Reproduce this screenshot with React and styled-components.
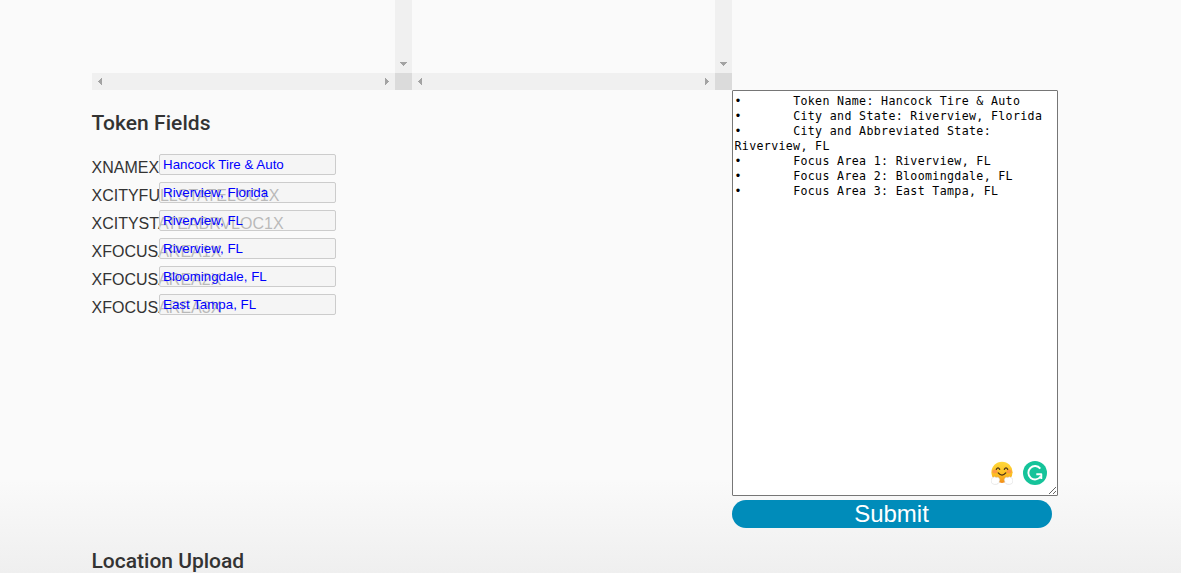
import React from "react";
import styled, { createGlobalStyle } from "styled-components";

const GlobalStyle = createGlobalStyle`
  * { box-sizing: border-box; }
  body { margin: 0; background: #fafafa; overflow: hidden; }
`;

const Page = styled.div`
  height: 573px;
  overflow: hidden;
  padding-left: 92px;
  color: #333;
  font: 16px/20px "Liberation Sans", Arial, sans-serif;
  background: linear-gradient(#fafafa 0, #fafafa 480px, #efefef 573px);
`;

const Panels = styled.div`
  display: flex;
  height: 90px;
`;

const Panel = styled.div`
  display: grid;
  grid-template-columns: 303px 17px;
  grid-template-rows: 73px 17px;
`;

const VerticalBar = styled.div`
  display: flex;
  align-items: flex-end;
  justify-content: center;
  padding-bottom: 7px;
  background: #f0f0f0;
`;

const HorizontalBar = styled.div`
  display: flex;
  align-items: center;
  justify-content: space-between;
  padding: 0 6px;
  background: #f0f0f0;
`;

const Corner = styled.div`
  background: #dbdbdb;
`;

const Arrow = styled.svg`
  display: block;
  fill: #a3a3a3;
`;

const Columns = styled.div`
  display: flex;
  height: 438px;
`;

const Fields = styled.section`
  width: 640px;
`;

const Heading = styled.h2`
  margin: 0 0 0 -0.5px;
  padding-top: 20px;
  color: #333;
  font: 500 21px/26px Roboto, sans-serif;
  letter-spacing: ${(p) => p.$spacing}px;
  white-space: nowrap;
`;

const FieldList = styled.div`
  display: flex;
  flex-direction: column;
  gap: 7px;
  padding-top: 18px;
`;

const Field = styled.label`
  display: flex;
  height: 21px;
`;

const FieldName = styled.span`
  width: 67px;
  padding-top: 4px;
  text-indent: -0.5px;
  white-space: nowrap;
`;

const FieldInput = styled.input`
  position: relative;
  width: 177px;
  height: 21px;
  padding: 1px 3px;
  border: 1px solid #ccc;
  border-radius: 2px;
  outline: 0;
  color: #00f;
  background: rgba(242, 242, 242, 0.7);
  font: 13.333px "Liberation Sans", Arial, sans-serif;
`;

const Entry = styled.section`
  width: 326px;
`;

const EditorWrap = styled.div`
  position: relative;
  height: 406px;
`;

const Editor = styled.textarea`
  display: block;
  width: 326px;
  height: 406px;
  margin: 0;
  padding: 3px 2px 2px 1.5px;
  border: 1px solid #767676;
  border-radius: 1px;
  outline: 0;
  color: #000;
  background: #fff;
  font: 11.6px/15px "DejaVu Sans Mono", monospace;
  letter-spacing: 0.347px;
  tab-size: 8;
  resize: both;
  overflow: hidden;
`;

const Badges = styled.div`
  position: absolute;
  right: 11px;
  bottom: 11px;
  display: flex;
  gap: 10px;
`;

const Submit = styled.button`
  display: block;
  width: 320px;
  height: 28px;
  margin-top: 4px;
  padding: 0 1px 0 0;
  border: 0;
  border-radius: 14px;
  color: #fff;
  background: #008cba;
  font: 24px/28px "Liberation Sans", Arial, sans-serif;
`;

const fields = [
  ["XNAMEX", "Hancock Tire & Auto"],
  ["XCITYFULLSTATELOC1X", "Riverview, Florida"],
  ["XCITYSTATEABRVLOC1X", "Riverview, FL"],
  ["XFOCUSAREA1X", "Riverview, FL"],
  ["XFOCUSAREA2X", "Bloomingdale, FL"],
  ["XFOCUSAREA3X", "East Tampa, FL"],
];

const notes = [
  "Token Name: Hancock Tire & Auto",
  "City and State: Riverview, Florida",
  "City and Abbreviated State: Riverview, FL",
  "Focus Area 1: Riverview, FL",
  "Focus Area 2: Bloomingdale, FL",
  "Focus Area 3: East Tampa, FL",
]
  .map((line) => "•\t" + line)
  .join("\n");

function ScrollPanel() {
  return (
    <Panel>
      <div />
      <VerticalBar>
        <Arrow width="7" height="4" shapeRendering="crispEdges">
          <path d="M0 0h7v1H6v1H5v1H4v1H3V3H2V2H1V1H0z" />
        </Arrow>
      </VerticalBar>
      <HorizontalBar>
        <Arrow width="4" height="7" shapeRendering="crispEdges">
          <path d="M4 0v7H3V6H2V5H1V4H0V3h1V2h1V1h1V0z" />
        </Arrow>
        <Arrow width="4" height="7" shapeRendering="crispEdges">
          <path d="M0 0v7h1V6h1V5h1V4h1V3H3V2H2V1H1V0z" />
        </Arrow>
      </HorizontalBar>
      <Corner />
    </Panel>
  );
}

function HugFace() {
  return (
    <svg width="22" height="24" viewBox="0 0 22 24">
      <defs>
        <linearGradient id="face" x1="0" y1="0" x2="0" y2="1">
          <stop offset="0" stopColor="#ffd83b" />
          <stop offset="0.6" stopColor="#fcbf22" />
          <stop offset="1" stopColor="#f28c18" />
        </linearGradient>
      </defs>
      <circle cx="11" cy="11.3" r="10.6" fill="url(#face)" />
      <ellipse cx="3.900" cy="10.600" rx="2.600" ry="2" fill="#ff8055" opacity=".6" />
      <ellipse cx="18.100" cy="10.600" rx="2.600" ry="2" fill="#ff8055" opacity=".6" />
      <g fill="none" stroke="#493018" strokeWidth="1.300" strokeLinecap="round">
        <path d="M5.300 8.300Q7 5.600 8.700 8.300M13.300 8.300Q15 5.600 16.700 8.300M7.200 11.900Q11 16.400 14.800 11.900" />
      </g>
      <g fill="#fff" stroke="#d2d2d2" strokeWidth=".5">
        <path d="M.4 21.500C-.2 19 .4 16.900 2 16.600Q3.500 15.200 5 16.400Q7.500 15.600 8 17.200Q9.300 18.500 8.300 20C8.500 22.600 6.200 23.500 3.700 23.400Q1.200 23.400.4 21.500z" />
        <path d="M21.600 21.500C22.200 19 21.600 16.900 20 16.600Q18.500 15.200 17 16.400Q14.500 15.600 14 17.200Q12.700 18.500 13.700 20C13.500 22.600 15.800 23.500 18.300 23.400Q20.800 23.400 21.600 21.500z" />
      </g>
    </svg>
  );
}

function CheckerMark() {
  return (
    <svg width="24" height="24" viewBox="0 0 24 24">
      <circle cx="12" cy="12" r="12" fill="#15c39a" />
      <path
        d="M17.300 7.600A6.700 6.700 0 1 0 17.600 15.500M13.300 13.300H18.300V18"
        fill="none"
        stroke="#fff"
        strokeWidth="1.900"
        strokeLinejoin="round"
      />
    </svg>
  );
}

export default function App() {
  return (
    <>
      <GlobalStyle />
      <Page>
        <Panels>
          <ScrollPanel />
          <ScrollPanel />
        </Panels>
        <Columns>
          <Fields>
            <Heading $spacing={0.06}>Token Fields</Heading>
            <FieldList>
              {fields.map(([name, value]) => (
                <Field key={name}>
                  <FieldName>{name}</FieldName>
                  <FieldInput defaultValue={value} spellCheck={false} />
                </Field>
              ))}
            </FieldList>
          </Fields>
          <Entry>
            <EditorWrap>
              <Editor defaultValue={notes} spellCheck={false} />
              <Badges>
                <HugFace />
                <CheckerMark />
              </Badges>
            </EditorWrap>
            <Submit>Submit</Submit>
          </Entry>
        </Columns>
        <Heading $spacing={0}>Location Upload</Heading>
      </Page>
    </>
  );
}
